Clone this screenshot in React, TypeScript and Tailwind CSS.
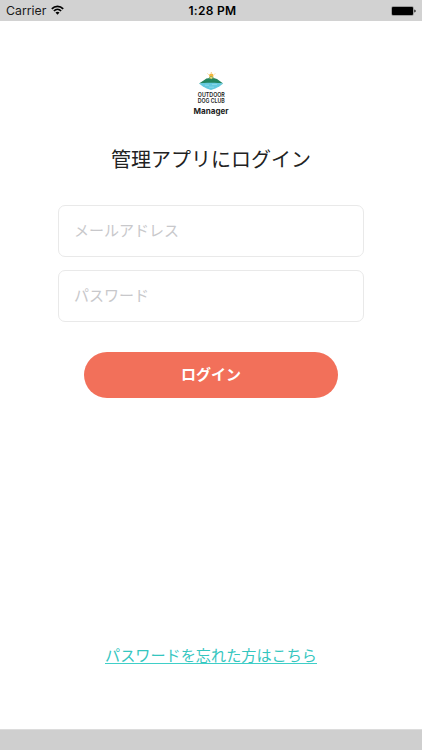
import React, { useState } from 'react';

const StatusBar: React.FC = () => (
  <div className="grid h-[21px] grid-cols-3 items-center bg-[#d2d2d2] pl-[6px] pr-[6px] text-[12.3px] text-[#1a1a1a]">
    <div className="flex items-center gap-[5px]">
      <span className="pt-[2px] leading-none">Carrier</span>
      <svg className="h-[10px] w-[13px]" viewBox="0 0 13 10">
        <g fill="none" stroke="#000" strokeWidth="1.7">
          <path d="M0.8 3.9C4 0.6 9 0.6 12.2 3.9" />
          <path d="M2.9 6C5 3.9 8 3.9 10.1 6" />
        </g>
        <path d="M4.5 7.6C5.6 6.5 7.4 6.5 8.5 7.6L6.5 9.7Z" fill="#000" />
      </svg>
    </div>
    <span className="pl-[3px] pt-px text-center text-[12px] font-semibold leading-none tracking-[0.3px] text-black">1:28 PM</span>
    <svg className="h-[10px] w-[25px] justify-self-end" viewBox="0 0 25 10">
      <rect x="0.3" y="0.3" width="22.4" height="9.4" rx="1.6" fill="#8b8b8b" />
      <rect x="1" y="1" width="21" height="8" rx="1" fill="#000" />
      <path d="M23.4 3.4C25 3.8 25 6.2 23.4 6.6Z" fill="#000" />
    </svg>
  </div>
);

const Logo: React.FC = () => (
  <svg className="h-[44px] w-[40px]" viewBox="0 0 40 44">
    {/* Sun and rays */}
    <circle cx="20.3" cy="3.8" r="2.2" fill="#f3b63f" />
    <path d="M20.3 0.2V1.2M16.6 1.6L17.5 2.5M24 1.6L23.1 2.5" stroke="#f3b63f" strokeWidth="0.8" />
    {/* Mountain */}
    <path d="M8 11.6L12.6 8.4L15.4 6.4L17.4 6.2L20.2 4L23.4 6.2L26 7L32.2 11.6Z" fill="#22855f" />
    <path d="M17.6 6.6L20.2 4.2L22.8 6.6L21.2 6.3L20.2 7.3L19.1 6.3Z" fill="#e6d978" />
    {/* Lake */}
    <path d="M8 11.6C13 10.6 27 10.6 32.2 11.6L28.6 14.2L24.4 16.4L20 18L15.6 16.4L11.6 14.2Z" fill="#64c9de" />
    <path d="M14 13.2H18M21 12.4H26M18 15.2H23" stroke="#a6e3ee" strokeWidth="0.6" />
    <g fill="#222" fontFamily="Inter, sans-serif" fontWeight="600" fontSize="6">
      <text x="6.8" y="25.2" textLength="27" lengthAdjust="spacingAndGlyphs">OUTDOOR</text>
      <text x="6.8" y="31.2" textLength="27" lengthAdjust="spacingAndGlyphs">DOG CLUB</text>
    </g>
    <text x="2.6" y="42" fill="#222" fontFamily="Inter, sans-serif" fontWeight="700" fontSize="8" textLength="35" lengthAdjust="spacingAndGlyphs">
      Manager
    </text>
  </svg>
);

interface FieldProps {
  type: string;
  placeholder: string;
  value: string;
  onChange: (value: string) => void;
}

const Field: React.FC<FieldProps> = ({ type, placeholder, value, onChange }) => (
  <input
    type={type}
    placeholder={placeholder}
    aria-label={placeholder}
    value={value}
    onChange={e => onChange(e.target.value)}
    className="h-[52px] w-full rounded-[7px] border border-[#e9e9e9] bg-white px-[15px] pb-px text-[15px] text-[#222] outline-none placeholder:text-[#c8c8cb]"
  />
);

export default function App() {
  const [email, setEmail] = useState('');
  const [password, setPassword] = useState('');

  return (
    <div className="flex h-screen flex-col bg-white font-[Inter,'Noto_Sans_CJK_JP',sans-serif]">
      <StatusBar />

      <main className="flex flex-1 flex-col items-center pt-[51px]">
        <Logo />
        <h1 className="mt-[29px] text-[20px] leading-[30px] text-[#222]">管理アプリにログイン</h1>

        <form className="mt-[29.5px] flex w-[306px] flex-col items-center gap-[13px]" onSubmit={e => e.preventDefault()}>
          <Field type="email" placeholder="メールアドレス" value={email} onChange={setEmail} />
          <Field type="password" placeholder="パスワード" value={password} onChange={setPassword} />
          <button
            type="submit"
            className="mt-[17px] h-[46px] w-[254px] cursor-pointer rounded-full bg-[#f2705a] pt-px text-[15px] font-bold text-white"
          >
            ログイン
          </button>
        </form>

        <a href="#" className="mt-auto mb-[65px] border-b border-[#3fcfc8] text-[15.15px] leading-[15px] text-[#35c6bf]">
          パスワードを忘れた方はこちら
        </a>
      </main>

      <div className="h-[21px] border-t border-[#dcdcdc] bg-[#cfcfcf]" />
    </div>
  );
}
